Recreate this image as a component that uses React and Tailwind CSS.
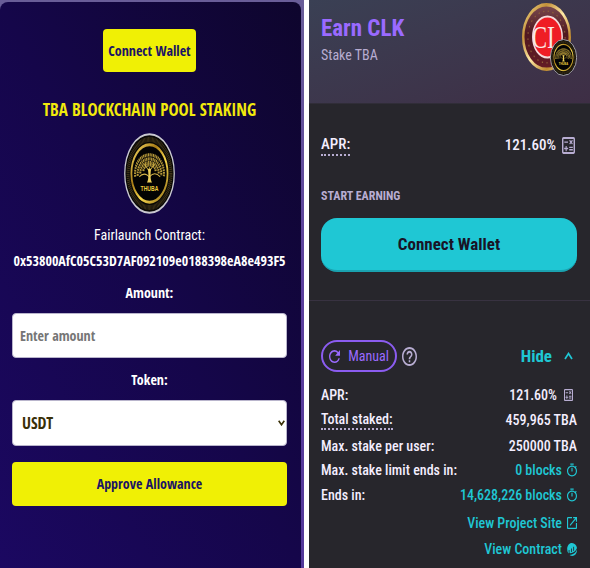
import React from "react";

const LEFT_FONT = "font-['Open_Sans_Condensed','Roboto_Condensed','Liberation_Sans',sans-serif]";
const RIGHT_FONT = "font-['Roboto_Condensed',Roboto,sans-serif]";

function Tree() {
  return (
    <g>
      <g fill="none" stroke="#b5983a" strokeWidth="4" strokeDasharray="2.2 1">
        <path d="M22 54C17 18 83 18 78 54" />
        <path d="M27 53C24 25 76 25 73 53" />
        <path d="M32 50C31 32 69 32 68 50" />
        <path d="M38 47C39 37 61 37 62 47" />
      </g>
      <g fill="none" stroke="#d9b94a" strokeWidth="1.3">
        <path d="M50 60V42M50 55C44 49 35 50 30 54M50 54C57 49 65 50 71 54M50 48L40 38M50 47L60 38" />
      </g>
      <path d="M45 61C49 57 48 50 47 44H53C52 50 51 57 55 61Z" fill="#ecd05a" />
    </g>
  );
}

function ThubaLogo({ className }) {
  return (
    <svg viewBox="0 0 100 100" preserveAspectRatio="none" className={className} role="img" aria-label="Thuba">
      <defs>
        <linearGradient id="thubaRing" x1="0" y1="0" x2="1" y2="1">
          <stop offset="0" stopColor="#fbe06a" />
          <stop offset="0.35" stopColor="#a87c16" />
          <stop offset="0.6" stopColor="#f9d84e" />
          <stop offset="1" stopColor="#8b6712" />
        </linearGradient>
      </defs>
      <circle cx="50" cy="50" r="48.5" fill="#080704" stroke="#c9c8d0" strokeWidth="2.5" />
      <circle cx="50" cy="50" r="42" fill="none" stroke="#40351a" strokeWidth="6" strokeDasharray="1.5 1" />
      <circle cx="50" cy="50" r="35.5" fill="#030303" stroke="url(#thubaRing)" strokeWidth="3.5" />
      <Tree />
      <text x="50" y="71" textAnchor="middle" fontSize="10" fontWeight="700" fill="#f0cf3c" fontFamily="Liberation Sans">
        THUBA
      </text>
    </svg>
  );
}

function ClkLogo({ className }) {
  return (
    <svg viewBox="0 0 100 100" preserveAspectRatio="none" className={className} role="img" aria-label="CLK">
      <defs>
        <linearGradient id="clkRim" x1="0" y1="0" x2="1" y2="1">
          <stop offset="0" stopColor="#f6dd8c" />
          <stop offset="0.25" stopColor="#c3913a" />
          <stop offset="0.5" stopColor="#ffe9a6" />
          <stop offset="0.75" stopColor="#c08a2e" />
          <stop offset="1" stopColor="#fff0b5" />
        </linearGradient>
        <linearGradient id="clkBody" x1="0" y1="0" x2="0" y2="1">
          <stop offset="0" stopColor="#7a4a50" />
          <stop offset="0.45" stopColor="#4f1820" />
          <stop offset="1" stopColor="#651c25" />
        </linearGradient>
      </defs>
      <circle cx="50" cy="50" r="47.5" fill="url(#clkBody)" stroke="url(#clkRim)" strokeWidth="5" />
      <circle cx="50" cy="50" r="38" fill="none" stroke="#8f6238" strokeWidth="2" strokeDasharray="2.5 7" />
      <circle cx="52" cy="50" r="30" fill="#ef1d25" stroke="#f3dcdc" strokeWidth="3" />
      <text x="50" y="66" textAnchor="middle" fontSize="46" fill="#fbe9e6" fontFamily="Liberation Serif">
        CL
      </text>
    </svg>
  );
}

function Calculator({ className }) {
  return (
    <svg viewBox="3 3 18 18" preserveAspectRatio="none" fill="currentColor" className={className} aria-hidden="true">
      <path d="M19 3H5c-1.1 0-2 .9-2 2v14c0 1.1.9 2 2 2h14c1.1 0 2-.9 2-2V5c0-1.1-.9-2-2-2zm0 16H5V5h14v14z" />
      <path d="M6.25 7.72h5v1.5h-5zM13 15.75h5v1.5h-5zM13 13.25h5v1.5h-5zM8 18h1.5v-2h2v-1.5h-2v-2H8v2H6V16h2zM14.09 10.95l1.41-1.41 1.41 1.41 1.06-1.06-1.41-1.42 1.41-1.41L16.91 6 15.5 7.41 14.09 6l-1.06 1.06 1.41 1.41-1.41 1.42z" />
    </svg>
  );
}

function Timer() {
  return (
    <svg viewBox="3 0 18 23" preserveAspectRatio="none" fill="currentColor" className="h-[14px] w-[10px]" aria-hidden="true">
      <path d="M15 1H9v2h6V1zm-4 13h2V8h-2v6zm8.03-6.61l1.42-1.42c-.43-.51-.9-.99-1.41-1.41l-1.42 1.42C16.07 4.74 14.12 4 12 4c-4.97 0-9 4.03-9 9s4.02 9 9 9 9-4.03 9-9c0-2.12-.74-4.07-1.97-5.61zM12 20c-3.87 0-7-3.13-7-7s3.13-7 7-7 7 3.13 7 7-3.13 7-7 7z" />
    </svg>
  );
}

function OpenNew() {
  return (
    <svg viewBox="3 3 18 18" preserveAspectRatio="none" fill="currentColor" className="h-3 w-[10px]" aria-hidden="true">
      <path d="M19 19H5V5h7V3H5c-1.11 0-2 .9-2 2v14c0 1.1.89 2 2 2h14c1.1 0 2-.9 2-2v-7h-2v7zM14 3v2h3.59l-9.83 9.83 1.41 1.41L19 6.41V10h2V3h-7z" />
    </svg>
  );
}

function Scan() {
  return (
    <svg viewBox="0 0 24 24" preserveAspectRatio="none" className="h-[13px] w-[10px]" aria-hidden="true">
      <path
        d="M3 19C-3 10 2 0 12 0c6 0 11 4 12 9-3 6-9 9-16 10-1 0-2-1-2-2v-4H4v5c0 1 0 1-1 1zM10 10v7l2-1v-6zM15 7v8l2-1V7z"
        fill="currentColor"
        fillRule="evenodd"
      />
      <path d="M6 22c8 0 15-4 18-10 1 9-9 15-18 10z" fill="currentColor" />
    </svg>
  );
}

function StakingForm() {
  return (
    <section className="flex min-w-0 bg-gradient-to-b from-[#695d98] via-[#5b3f9d] to-[#53389a] pr-[3px] pt-[2px]">
      <form
        onSubmit={(e) => e.preventDefault()}
        className={`flex min-w-0 flex-1 flex-col items-center rounded-t-lg bg-gradient-to-tr from-[#1b0861] via-[#15064a] to-[#0e052d] pl-3 pr-[14px] pt-[27px] text-sm leading-6 text-white ${LEFT_FONT}`}
      >
        <button type="button" className="h-[43px] rounded bg-[#f0f005] px-[5px] font-bold text-[#1b1464]">
          Connect Wallet
        </button>
        <h1 className="mt-[26px] text-[17px] font-bold leading-6 text-[#f2ea0c]">TBA BLOCKCHAIN POOL STAKING</h1>
        <ThubaLogo className="mt-[11px] h-[81px] w-[51px]" />
        <p className="mt-[9px] font-['Roboto_Condensed',Roboto,sans-serif]">Fairlaunch Contract:</p>
        <p className="mt-[2px] font-bold">0x53800AfC05C53D7AF092109e0188398eA8e493F5</p>
        <label htmlFor="amount" className="mt-2 font-bold">
          Amount:
        </label>
        <input
          id="amount"
          type="text"
          placeholder="Enter amount"
          className="mt-2 h-[45px] w-full rounded border border-[#b9b5cc] bg-white px-[7px] font-bold text-[#3a3008] placeholder:text-[#767676]"
        />
        <label htmlFor="token" className="mt-[10px] font-bold">
          Token:
        </label>
        <div className="relative mt-2 w-full">
          <select
            id="token"
            className="block h-[46px] w-full appearance-none rounded border border-[#b9b5cc] bg-white px-[9px] text-base font-bold text-[#3a3008]"
          >
            <option>USDT</option>
          </select>
          <svg
            viewBox="0 0 7 6"
            className="pointer-events-none absolute right-[2px] top-5 h-[6px] w-[7px]"
            fill="none"
            stroke="#3a3008"
            strokeWidth="1.6"
            aria-hidden="true"
          >
            <path d="M.7.8 3.5 4.8 6.3.8" />
          </svg>
        </div>
        <button type="submit" className="mt-4 h-[44px] w-full rounded bg-[#f0f005] font-bold text-[#1b1464]">
          Approve Allowance
        </button>
      </form>
    </section>
  );
}

function Row({ label, dotted, children, className }) {
  return (
    <div className={`flex items-center justify-between ${className}`}>
      <dt className={dotted ? "border-b-2 border-dotted border-[#b8add2] leading-[18px]" : ""}>{label}</dt>
      <dd className="flex items-center">{children}</dd>
    </div>
  );
}

function PoolCard() {
  return (
    <section className={`flex min-w-0 flex-col bg-[#27262c] text-sm font-medium leading-6 text-[#f4eeff] ${RIGHT_FONT}`}>
      <header className="flex h-[104px] justify-between border-b border-[#302d38] bg-gradient-to-br from-[#3a4054] to-[#3e2e45] pl-3 pr-[13px]">
        <div className="pt-[15px]">
          <h2 className="text-[23px] font-bold leading-7 text-[#9a6aff]">Earn CLK</h2>
          <p className="font-normal text-[#b8add2]">Stake TBA</p>
        </div>
        <div className="relative mt-[3px] h-[73px] w-[55px]">
          <ClkLogo className="h-[68px] w-[49px]" />
          <ThubaLogo className="absolute bottom-0 right-0 h-[37px] w-[27px]" />
        </div>
      </header>

      <div className="border-b border-[#383241] pb-7 pl-3 pr-[13px] pt-[29px]">
        <div className="flex items-center justify-between text-[15px] leading-6">
          <span className="border-b-2 border-dotted border-[#b8add2] leading-5">APR:</span>
          <span className="flex items-center gap-[6px]">
            121.60%
            <Calculator className="mr-[2px] h-[17px] w-[13px] text-[#b8add2]" />
          </span>
        </div>
        <p className="mt-[29px] text-xs font-bold leading-5 text-[#b8add2]">START EARNING</p>
        <button
          type="button"
          className="mt-3 h-[54px] w-full rounded-2xl border-b-2 border-[#1aa2b0] bg-[#1fc7d4] text-[17px] font-bold text-[#191326]"
        >
          Connect Wallet
        </button>
      </div>

      <div className="pl-3 pr-[13px] pt-[39px]">
        <div className="flex items-center">
          <span className="flex h-8 w-[76px] items-center justify-center gap-2 rounded-2xl border-2 border-[#8b5cf0] font-normal text-[#9a6aff]">
            <svg viewBox="4 4 16 16" preserveAspectRatio="none" fill="currentColor" className="h-[13px] w-[11px]" aria-hidden="true">
              <path d="M17.65 6.35A7.958 7.958 0 0 0 12 4c-4.42 0-7.99 3.58-7.99 8s3.57 8 7.99 8c3.73 0 6.84-2.55 7.73-6h-2.08A5.99 5.99 0 0 1 12 18c-3.31 0-6-2.69-6-6s2.69-6 6-6c1.66 0 3.14.69 4.22 1.78L13 11h7V4z" />
            </svg>
            Manual
          </span>
          <svg viewBox="2 2 20 20" preserveAspectRatio="none" fill="#b8add2" className="ml-[5px] h-[19px] w-[15px]" aria-hidden="true">
            <path d="M11 18h2v-2h-2v2zm1-16C6.48 2 2 6.48 2 12s4.48 10 10 10 10-4.48 10-10S17.52 2 12 2zm0 18c-4.41 0-8-3.59-8-8s3.59-8 8-8 8 3.59 8 8-3.59 8-8 8zm0-14c-2.21 0-4 1.79-4 4h2c0-1.1.9-2 2-2s2 .9 2 2c0 2-3 1.75-3 5h2c0-2.25 3-2.5 3-5 0-2.21-1.79-4-4-4z" />
          </svg>
          <button type="button" className="ml-auto mr-1 flex items-center gap-3 text-[17px] font-bold text-[#1fc7d4]">
            Hide
            <svg viewBox="0 0 9 8" fill="none" stroke="currentColor" strokeWidth="1.7" className="h-2 w-[9px]" aria-hidden="true">
              <path d="M1 7 4.5 1.5 8 7" />
            </svg>
          </button>
        </div>

        <dl className="mt-[11px]">
          <Row label="APR:" className="h-6">
            121.60%
            <Calculator className="ml-[7px] mr-1 h-3 w-[9px] text-[#b8add2]" />
          </Row>
          <Row label="Total staked:" dotted className="h-[26px]">
            459,965 TBA
          </Row>
          <Row label="Max. stake per user:" className="h-[25px]">
            250000 TBA
          </Row>
          <Row label="Max. stake limit ends in:" className="h-6">
            <a href="#limit" className="flex items-center gap-[5px] text-[#1fc7d4]">
              0 blocks <Timer />
            </a>
          </Row>
          <Row label="Ends in:" className="h-[25px]">
            <a href="#ends" className="flex items-center gap-[5px] text-[#1fc7d4]">
              14,628,226 blocks <Timer />
            </a>
          </Row>
        </dl>
        <div className="mt-1 flex flex-col items-end gap-[2px] pb-1 text-[#1fc7d4]">
          <a href="#project" className="flex items-center gap-[5px]">
            View Project Site <OpenNew />
          </a>
          <a href="#contract" className="flex items-center gap-[5px]">
            View Contract <Scan />
          </a>
        </div>
      </div>
    </section>
  );
}

export default function App() {
  return (
    <main className="grid min-h-screen grid-cols-[304fr_281fr] gap-[5px] bg-white">
      <StakingForm />
      <PoolCard />
    </main>
  );
}
